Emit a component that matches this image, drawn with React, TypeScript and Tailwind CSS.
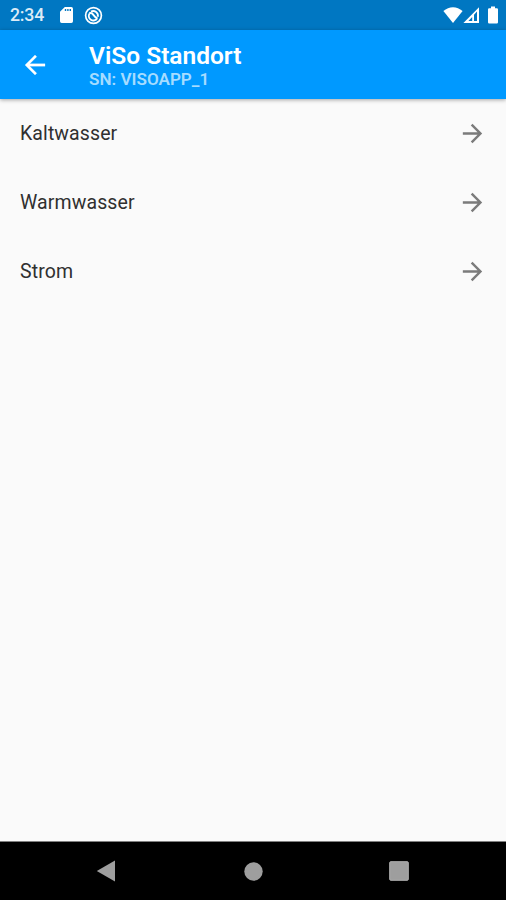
import React from 'react';

const meters = ['Kaltwasser', 'Warmwasser', 'Strom'];

const StatusBar: React.FC = () => (
  <div className="flex h-[30px] shrink-0 items-center bg-[#0077c2] pl-2.5 pr-[7px] text-white">
    <span className="w-[49px] pt-0.5 text-[17.7px] leading-none font-medium tracking-[-0.2px] text-[#dcecf7]">2:34</span>
    {/* SD card */}
    <svg width="15" height="18" viewBox="0 0 15 18" fill="currentColor" aria-hidden="true">
      <path
        fillRule="evenodd"
        d="M5.8 1H12.3Q14 1 14 2.7V15.3Q14 17 12.3 17H2.7Q1 17 1 15.3V5.8ZM5.8 3V5H7.2V3ZM8.2 3V5H9.6V3ZM10.6 3V5H12V3Z"
      />
    </svg>
    <svg className="ml-2.5" width="19" height="19" viewBox="0 0 19 19" fill="none" stroke="currentColor" aria-hidden="true">
      <circle cx="9.5" cy="9.5" r="7.9" strokeWidth="1.7" />
      <path d="M5.6 7.4A4.5 4.5 0 1 0 13.2 12.2" strokeWidth="1.8" />
      <path d="M7 5.6A4.7 4.7 0 0 1 13.8 10.8" strokeWidth="1.8" />
      <path d="M5.2 7.2Q8 6.6 9.5 9T13.4 12.2" strokeWidth="2" />
    </svg>
    <div className="ml-auto flex items-center">
      <svg width="20" height="18" viewBox="0 0 20 18" fill="currentColor" aria-hidden="true">
        <path d="M10 17L0.4 5.1Q4.8 1.2 10 1.2T19.6 5.1Z" />
      </svg>
      <svg width="17" height="18" viewBox="0 0 17 18" fill="currentColor" aria-hidden="true">
        <path fillRule="evenodd" d="M16 1.2V17H0.4ZM14 5.6L11 8.8V15H14ZM9.2 11L5.4 15H9.2Z" />
      </svg>
      <svg className="ml-[7px]" width="12" height="18" viewBox="0 0 12 18" fill="currentColor" aria-hidden="true">
        <path d="M4 0.5H8V2.2H9.8Q11 2.2 11 3.5V16.2Q11 17.5 9.8 17.5H2.2Q1 17.5 1 16.2V3.5Q1 2.2 2.2 2.2H4Z" />
      </svg>
    </div>
  </div>
);

const AppBar: React.FC = () => (
  <header className="z-10 flex h-[69px] shrink-0 items-center bg-[#0099ff] pl-5 text-white shadow-[0_1px_4px_rgba(0,0,0,0.35)]">
    <button type="button" aria-label="Zurück">
      <svg width="30" height="30" viewBox="0 0 24 24" fill="currentColor" stroke="currentColor" strokeWidth="0.2" aria-hidden="true">
        <path d="M20 11H7.83l5.59-5.59L12 4l-8 8 8 8 1.41-1.41L7.83 13H20v-2z" />
      </svg>
    </button>
    <div className="ml-[39px] pt-px">
      <h1 className="text-[24.5px] leading-[27px] font-semibold">ViSo Standort</h1>
      <p className="text-[17.1px] leading-5 font-semibold text-[#a6dcff]">SN: VISOAPP_1</p>
    </div>
  </header>
);

const App: React.FC = () => {
  return (
    <div className="flex h-screen flex-col bg-[#fafafa] font-[Roboto,sans-serif]">
      <StatusBar />
      <AppBar />
      <main className="flex-1">
        <ul>
          {meters.map((name) => (
            <li key={name} className="flex h-[69px] items-center justify-between pl-5 pr-[19px] text-[#303030]">
              <span className="text-[19.5px] leading-6 tracking-[0.1px]">{name}</span>
              <svg className="text-[#7b7b7b]" width="29" height="29" viewBox="0 0 24 24" fill="currentColor" aria-hidden="true">
                <path d="M12 4l-1.41 1.41L16.17 11H4v2h12.17l-5.58 5.59L12 20l8-8z" />
              </svg>
            </li>
          ))}
        </ul>
      </main>
      <nav className="flex h-[59px] shrink-0 items-center border-t border-[#808080] bg-black pl-24 text-[#9e9e9e]">
        <svg width="20" height="22" viewBox="0 0 20 22" fill="currentColor" aria-hidden="true">
          <path d="M0.8 11L19 0.5V21.5Z" />
        </svg>
        <svg className="ml-32" width="19" height="19" viewBox="0 0 19 19" fill="currentColor" aria-hidden="true">
          <circle cx="9.5" cy="9.5" r="9.2" />
        </svg>
        <svg className="ml-[126px]" width="20" height="20" viewBox="0 0 20 20" aria-hidden="true">
          <rect x="0.7" y="0.7" width="18.6" height="18.6" rx="1" fill="#9e9e9e" stroke="#b0b0b0" strokeWidth="1" />
        </svg>
      </nav>
    </div>
  );
};

export default App;
